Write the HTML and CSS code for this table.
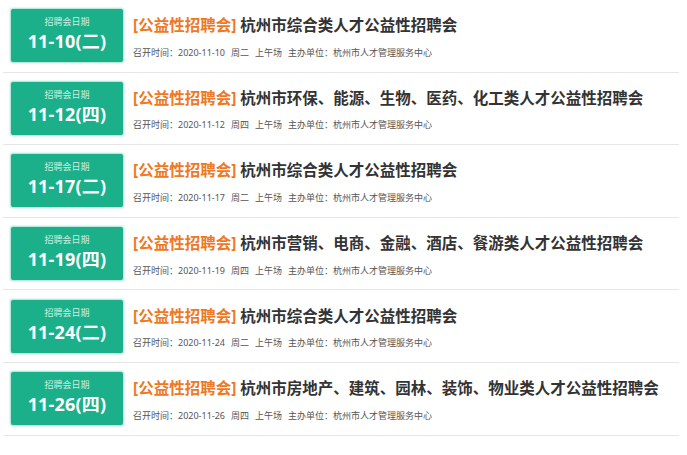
FILE: index.html
```html
<!DOCTYPE html>
<html lang="zh-CN">
<head>
<meta charset="utf-8">
<title>招聘会</title>
<link rel="stylesheet" href="styles.css">
</head>
<body>
<ul class="list">
  <li class="row">
    <div class="date"><div class="date-label">招聘会日期</div><div class="date-value">11-10(二)</div></div>
    <div class="info">
      <div class="title"><span class="tag">[公益性招聘会]</span> 杭州市综合类人才公益性招聘会</div>
      <div class="meta"><span>召开时间：2020-11-10</span><span>周二</span><span>上午场</span><span>主办单位：杭州市人才管理服务中心</span></div>
    </div>
  </li>
  <li class="row">
    <div class="date"><div class="date-label">招聘会日期</div><div class="date-value">11-12(四)</div></div>
    <div class="info">
      <div class="title"><span class="tag">[公益性招聘会]</span> 杭州市环保、能源、生物、医药、化工类人才公益性招聘会</div>
      <div class="meta"><span>召开时间：2020-11-12</span><span>周四</span><span>上午场</span><span>主办单位：杭州市人才管理服务中心</span></div>
    </div>
  </li>
  <li class="row">
    <div class="date"><div class="date-label">招聘会日期</div><div class="date-value">11-17(二)</div></div>
    <div class="info">
      <div class="title"><span class="tag">[公益性招聘会]</span> 杭州市综合类人才公益性招聘会</div>
      <div class="meta"><span>召开时间：2020-11-17</span><span>周二</span><span>上午场</span><span>主办单位：杭州市人才管理服务中心</span></div>
    </div>
  </li>
  <li class="row">
    <div class="date"><div class="date-label">招聘会日期</div><div class="date-value">11-19(四)</div></div>
    <div class="info">
      <div class="title"><span class="tag">[公益性招聘会]</span> 杭州市营销、电商、金融、酒店、餐游类人才公益性招聘会</div>
      <div class="meta"><span>召开时间：2020-11-19</span><span>周四</span><span>上午场</span><span>主办单位：杭州市人才管理服务中心</span></div>
    </div>
  </li>
  <li class="row">
    <div class="date"><div class="date-label">招聘会日期</div><div class="date-value">11-24(二)</div></div>
    <div class="info">
      <div class="title"><span class="tag">[公益性招聘会]</span> 杭州市综合类人才公益性招聘会</div>
      <div class="meta"><span>召开时间：2020-11-24</span><span>周二</span><span>上午场</span><span>主办单位：杭州市人才管理服务中心</span></div>
    </div>
  </li>
  <li class="row">
    <div class="date"><div class="date-label">招聘会日期</div><div class="date-value">11-26(四)</div></div>
    <div class="info">
      <div class="title"><span class="tag">[公益性招聘会]</span> 杭州市房地产、建筑、园林、装饰、物业类人才公益性招聘会</div>
      <div class="meta"><span>召开时间：2020-11-26</span><span>周四</span><span>上午场</span><span>主办单位：杭州市人才管理服务中心</span></div>
    </div>
  </li>
</ul>
</body>
</html>
```
FILE: styles.css
```css
html, body {
  margin: 0;
  padding: 0;
  background: #fff;
}
body {
  font-family: "Noto Sans", "Noto Sans CJK SC", sans-serif;
}
.list {
  list-style: none;
  margin: 0 0 0 3px;
  padding: 0;
  width: 676px;
}
.row {
  display: flex;
  align-items: flex-start;
  padding: 9.3px 8px 9.3px 8px;
  border-bottom: 1px solid #e6e6e6;
}
.date {
  width: 112px;
  height: 53px;
  flex: none;
  box-sizing: border-box;
  background: #1bb08a;
  border-radius: 2px;
  box-shadow: 0 0 2px 1px rgba(80, 200, 165, 0.55);
  color: #fff;
  text-align: center;
  display: flex;
  flex-direction: column;
  align-items: center;
}
.date-label {
  font-size: 9px;
  line-height: 12px;
  margin-top: 7px;
  color: #cdeee2;
}
.date-value {
  font-size: 18px;
  font-weight: 700;
  line-height: 22px;
  margin-top: 2px;
  letter-spacing: 0.2px;
}
.info {
  margin-left: 10px;
  display: flex;
  flex-direction: column;
}
.title {
  font-size: 15.5px;
  font-weight: 700;
  line-height: 20px;
  margin-top: 6px;
  color: #333;
  white-space: nowrap;
}
.tag {
  color: #ef7824;
}
.meta {
  font-size: 9px;
  line-height: 14px;
  margin-top: 10.5px;
  color: #555;
  white-space: nowrap;
}
.meta span {
  margin-right: 6px;
}
```
